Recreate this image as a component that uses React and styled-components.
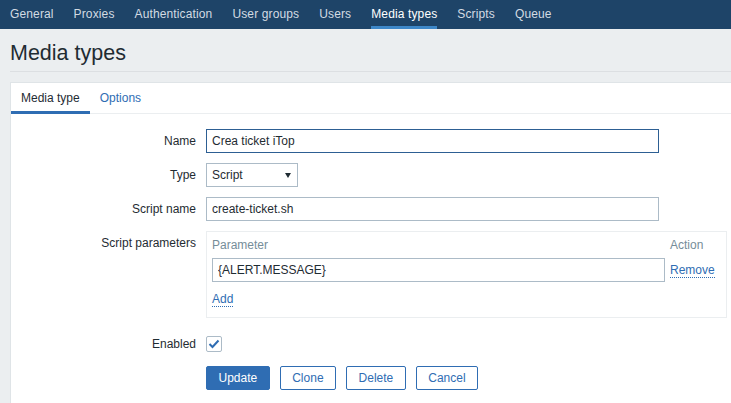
import React from 'react'
import styled, { createGlobalStyle } from 'styled-components'

const GlobalStyle = createGlobalStyle`
  html, body {
    margin: 0;
    padding: 0;
    background: #ebeef0;
    overflow: hidden;
  }
  body {
    font-family: "Liberation Sans", Arial, sans-serif;
    font-size: 12px;
    color: #1f2c33;
  }
`

const TopNav = styled.nav`
  display: flex;
  height: 29px;
  background: #1e4468;
`

const NavItem = styled.a`
  margin: 0 10px;
  line-height: 29px;
  height: 29px;
  box-sizing: border-box;
  white-space: nowrap;
  letter-spacing: 0.13px;
  text-decoration: none;
  color: ${p => (p.$active ? '#ffffff' : '#d3dbe3')};
  box-shadow: ${p => (p.$active ? 'inset 0 -3px 0 #3d87c8' : 'none')};
`

const PageHeader = styled.header`
  margin-left: 10px;
  padding: 12px 0 6px;
  border-bottom: 1px solid #dcdfe2;
`

const Title = styled.h1`
  margin: 0;
  font-size: 21.5px;
  line-height: 24px;
  font-weight: normal;
  color: #1f2c33;
`

const Panel = styled.section`
  margin: 10px 0 0 10px;
  width: 780px;
  min-height: 340px;
  background: #ffffff;
  border: 1px solid #dfe4e7;
`

const TabRow = styled.div`
  display: flex;
  border-bottom: 1px solid #ebeef0;
`

const Tab = styled.a`
  padding: 0 10px;
  height: 31px;
  line-height: 30px;
  margin-bottom: -1px;
  box-sizing: border-box;
  text-decoration: none;
  color: ${p => (p.$active ? '#1f2c33' : '#2f6db3')};
  box-shadow: ${p => (p.$active ? 'inset 0 -3px 0 #2f6db3' : 'none')};
`

const Form = styled.div`
  display: grid;
  grid-template-columns: 185px auto;
  column-gap: 10px;
  row-gap: 10px;
  padding-top: 15px;
  align-items: start;
`

const Label = styled.label`
  text-align: right;
  line-height: 24px;
  white-space: nowrap;
`

const TextInput = styled.input`
  display: block;
  width: ${p => p.$width || 453}px;
  height: 24px;
  box-sizing: border-box;
  margin: 0;
  padding: 0 5px;
  border: 1px solid ${p => (p.$focused ? '#2d5f93' : '#acbbc7')};
  border-radius: 0;
  outline: none;
  background: #ffffff;
  font-family: inherit;
  font-size: 12px;
  color: #1f2c33;
`

const Select = styled.div`
  display: flex;
  align-items: center;
  justify-content: space-between;
  width: 92px;
  height: 24px;
  box-sizing: border-box;
  padding: 0 6px 0 5px;
  border: 1px solid #acbbc7;
  background: #ffffff;
`

const ParamsBox = styled.div`
  width: 521px;
  box-sizing: border-box;
  padding: 6px 5px 11px;
  border: 1px solid #ebeef0;
  margin-bottom: 4px;
`

const ParamsGrid = styled.div`
  display: grid;
  grid-template-columns: 453px 51px;
  column-gap: 5px;
`

const HeadCell = styled.div`
  line-height: 14px;
  margin-bottom: 6px;
  color: #768d99;
`

const Cell = styled.div`
  line-height: 24px;
`

const LinkButton = styled.a`
  color: #2f6db3;
  text-decoration: none;
  border-bottom: 1px dotted #2f6db3;
  cursor: pointer;
`

const AddLine = styled.div`
  margin-top: 10px;
  line-height: 14px;
`

const CheckRow = styled.div`
  height: 24px;
  display: flex;
  align-items: center;
`

const CheckBox = styled.span`
  display: flex;
  align-items: center;
  justify-content: center;
  width: 16px;
  height: 16px;
  box-sizing: border-box;
  border: 1px solid #acbbc7;
  border-radius: 2px;
  background: #ffffff;
`

const Buttons = styled.div`
  display: flex;
  gap: 10px;
`

const Button = styled.button`
  height: 24px;
  margin: 0;
  padding: 0 11.5px;
  box-sizing: border-box;
  border: 1px solid #2f6db3;
  border-radius: 2px;
  font-family: inherit;
  font-size: 12px;
  color: ${p => (p.$primary ? '#ffffff' : '#2f6db3')};
  background: ${p => (p.$primary ? '#2f6db3' : '#ffffff')};
  cursor: pointer;
`

const navItems = ['General', 'Proxies', 'Authentication', 'User groups', 'Users', 'Media types', 'Scripts', 'Queue']

export default function App() {
  return (
    <>
      <GlobalStyle />
      <TopNav>
        {navItems.map(item => (
          <NavItem key={item} $active={item === 'Media types'}>{item}</NavItem>
        ))}
      </TopNav>
      <PageHeader>
        <Title>Media types</Title>
      </PageHeader>
      <Panel>
        <TabRow>
          <Tab $active>Media type</Tab>
          <Tab>Options</Tab>
        </TabRow>
        <Form>
          <Label>Name</Label>
          <TextInput $focused defaultValue="Crea ticket iTop" />

          <Label>Type</Label>
          <Select>
            <span>Script</span>
            <svg width="6" height="5" viewBox="0 0 6 5">
              <path d="M0 0 L6 0 L3 5 Z" fill="#1f2c33" />
            </svg>
          </Select>

          <Label>Script name</Label>
          <TextInput defaultValue="create-ticket.sh" />

          <Label>Script parameters</Label>
          <ParamsBox>
            <ParamsGrid>
              <HeadCell>Parameter</HeadCell>
              <HeadCell>Action</HeadCell>
              <TextInput defaultValue="{ALERT.MESSAGE}" />
              <Cell><LinkButton>Remove</LinkButton></Cell>
            </ParamsGrid>
            <AddLine><LinkButton>Add</LinkButton></AddLine>
          </ParamsBox>

          <Label>Enabled</Label>
          <CheckRow>
            <CheckBox>
              <svg width="12" height="10" viewBox="0 0 12 10">
                <path d="M1.5 5 L4.5 8 L10.5 1.5" fill="none" stroke="#2f6db3" strokeWidth="2" />
              </svg>
            </CheckBox>
          </CheckRow>

          <span />
          <Buttons>
            <Button $primary>Update</Button>
            <Button>Clone</Button>
            <Button>Delete</Button>
            <Button>Cancel</Button>
          </Buttons>
        </Form>
      </Panel>
    </>
  )
}
